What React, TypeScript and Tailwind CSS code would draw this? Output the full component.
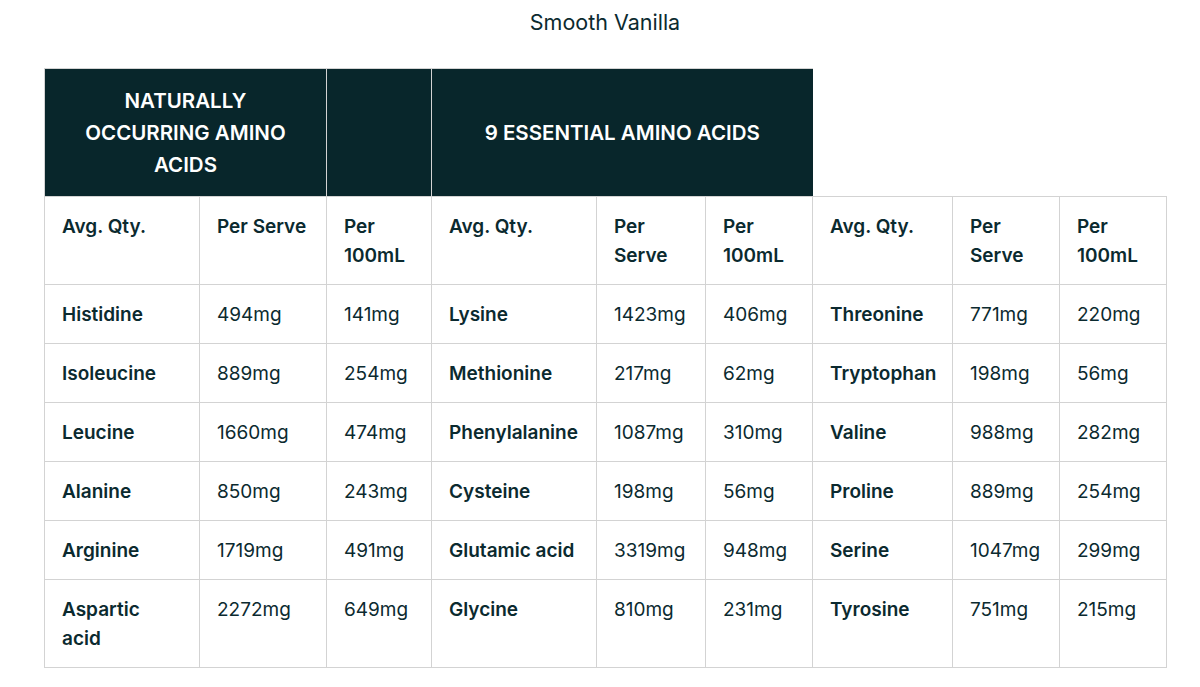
const head = ['Avg. Qty.', 'Per Serve', 'Per 100mL'];

const rows: [string, string, string][][] = [
  [
    ['Histidine', '494mg', '141mg'],
    ['Lysine', '1423mg', '406mg'],
    ['Threonine', '771mg', '220mg'],
  ],
  [
    ['Isoleucine', '889mg', '254mg'],
    ['Methionine', '217mg', '62mg'],
    ['Tryptophan', '198mg', '56mg'],
  ],
  [
    ['Leucine', '1660mg', '474mg'],
    ['Phenylalanine', '1087mg', '310mg'],
    ['Valine', '988mg', '282mg'],
  ],
  [
    ['Alanine', '850mg', '243mg'],
    ['Cysteine', '198mg', '56mg'],
    ['Proline', '889mg', '254mg'],
  ],
  [
    ['Arginine', '1719mg', '491mg'],
    ['Glutamic acid', '3319mg', '948mg'],
    ['Serine', '1047mg', '299mg'],
  ],
  [
    ['Aspartic acid', '2272mg', '649mg'],
    ['Glycine', '810mg', '231mg'],
    ['Tyrosine', '751mg', '215mg'],
  ],
];

const widths = [155, 127, 105, 165, 109, 107, 140, 107, 107];

const cell = 'border border-[#d3d3d3] px-[17px] py-[14.5px] align-top text-left';

export default function App() {
  return (
    <div className="min-h-screen bg-white text-[#0b2a2f] font-['Inter',sans-serif]">
      <div className="ml-[44px] w-[1122px]">
        <h1 className="pt-[8px] text-center text-[21.5px] leading-[28px] font-normal">Smooth Vanilla</h1>
        <table className="mt-[32px] w-[1122px] table-fixed border-collapse text-[19px] leading-[29px]">
          <colgroup>
            {widths.map((w, i) => (
              <col key={i} style={{ width: w }} />
            ))}
          </colgroup>
          <thead>
            <tr className="h-[128px]">
              <th colSpan={2} className="border border-[#d3d3d3] bg-[#08262b] px-[30px] text-center align-middle text-[20.5px] leading-[32px] font-semibold text-white uppercase">
                Naturally occurring amino acids
              </th>
              <th className="border border-[#d3d3d3] bg-[#08262b]" />
              <th colSpan={3} className="border border-[#d3d3d3] border-r-0 bg-[#08262b] text-center align-middle text-[20.5px] leading-[32px] font-semibold text-white uppercase">
                9 Essential Amino Acids
              </th>
              <th colSpan={3} className="border-0 bg-white" />
            </tr>
          </thead>
          <tbody>
            <tr>
              {[0, 1, 2].flatMap((g) =>
                head.map((h, i) => (
                  <td key={`${g}-${i}`} className={`${cell} font-semibold`}>
                    {h}
                  </td>
                ))
              )}
            </tr>
            {rows.map((r, ri) => (
              <tr key={ri}>
                {r.flatMap((grp, gi) =>
                  grp.map((v, ci) => (
                    <td key={`${gi}-${ci}`} className={`${cell} ${ci === 0 ? 'font-semibold' : 'font-normal'}`}>
                      {v}
                    </td>
                  ))
                )}
              </tr>
            ))}
          </tbody>
        </table>
      </div>
    </div>
  );
}
